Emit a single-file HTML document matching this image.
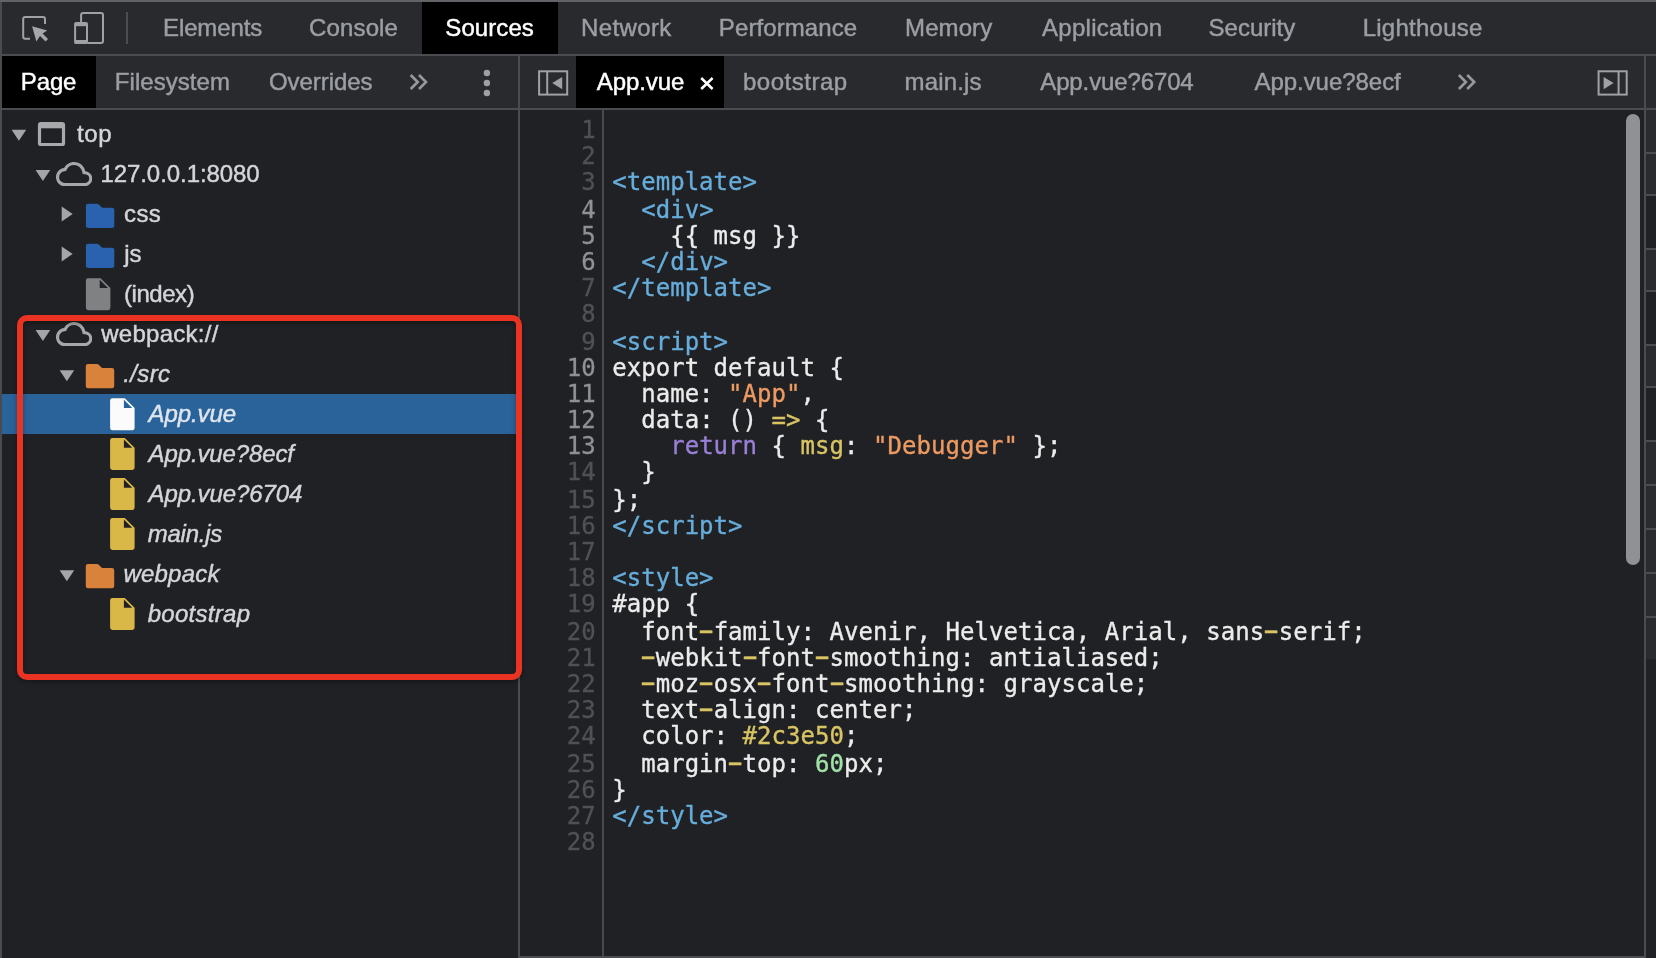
<!DOCTYPE html>
<html><head><meta charset="utf-8"><title>DevTools Sources</title>
<style>
html,body{margin:0;padding:0;}
body{width:1656px;height:958px;overflow:hidden;background:#202124;position:relative;font-family:"Liberation Sans","Helvetica Neue",Helvetica,Arial,sans-serif;}
#root{position:absolute;left:0;top:0;width:1656px;height:958px;will-change:transform}
.ab{position:absolute;display:block}
.tx{position:absolute;font-size:24px;line-height:28px;white-space:pre;-webkit-text-stroke:0.45px currentColor}
.ln{position:absolute;left:522px;width:73.6px;text-align:right;font-family:"DejaVu Sans Mono","Liberation Mono",monospace;font-size:24px;line-height:28px;height:28px;color:#4f5155;-webkit-text-stroke:0.3px currentColor}
.ln.b{color:#8f9194}
.cl{position:absolute;left:612.2px;font-family:"DejaVu Sans Mono","Liberation Mono",monospace;font-size:24px;line-height:28px;height:28px;white-space:pre;letter-spacing:0.04px;-webkit-text-stroke:0.35px currentColor}
.ct{color:#66addb} .cd{color:#ececec} .ck{color:#9a80d6} .cs{color:#ec9a62} .cy{color:#d8c463} .cg{color:#a2e2a8}
.ch{color:#d8c463;display:inline-block;transform:translateY(-0.4px) scale(1.95,1.15);transform-origin:50% 62%}
</style></head><body><div id="root">
<!-- toolbars -->
<div class="ab" style="left:0;top:0;width:1656px;height:54px;background:#292a2d"></div>
<div class="ab" style="left:0;top:54px;width:1656px;height:2px;background:#4a4c50"></div>
<div class="ab" style="left:0;top:56px;width:1656px;height:52px;background:#292a2d"></div>
<div class="ab" style="left:0;top:108px;width:1656px;height:2px;background:#4a4c50"></div>
<!-- selected tabs -->
<div class="ab" style="left:422px;top:2px;width:136px;height:52px;background:#000"></div>
<div class="ab" style="left:2px;top:56px;width:94px;height:52px;background:#000"></div>
<div class="ab" style="left:576px;top:56px;width:148px;height:52px;background:#000"></div>
<svg class="ab" style="left:408px;top:73px" width="22" height="19" viewBox="408 73 22 19"><path d="M410.70 75.00 L417.70 82.00 L410.70 89.00 M419.00 75.00 L426.00 82.00 L419.00 89.00" fill="none" stroke="#98999d" stroke-width="2.6"/></svg>
<svg class="ab" style="left:1457px;top:73px" width="22" height="19" viewBox="1457 73 22 19"><path d="M1458.90 75.00 L1465.90 82.00 L1458.90 89.00 M1467.20 75.00 L1474.20 82.00 L1467.20 89.00" fill="none" stroke="#98999d" stroke-width="2.6"/></svg>
<!-- kebab -->
<svg class="ab" style="left:482px;top:68px" width="10" height="30" viewBox="482 68 10 30"><circle cx="486.9" cy="73" r="3.2" fill="#a0a0a2"/><circle cx="486.9" cy="83" r="3.2" fill="#a0a0a2"/><circle cx="486.9" cy="93.05" r="3.2" fill="#a0a0a2"/></svg>
<!-- close x -->
<svg class="ab" style="left:698px;top:75px" width="18" height="17" viewBox="698 75 18 17"><path d="M701.2 78 L712.6 89 M712.6 78 L701.2 89" stroke="#ffffff" stroke-width="2.5" fill="none"/></svg>
<!-- toolbar divider -->
<div class="ab" style="left:126px;top:12px;width:2px;height:32px;background:#4b4d51"></div>
<!-- inspect icon -->
<svg class="ab" style="left:20px;top:14px" width="30" height="30" viewBox="20 14 30 30"><path d="M30 38.8 L25.2 38.8 Q23.2 38.8 23.2 36.8 L23.2 19 Q23.2 17 25.2 17 L43 17 Q45 17 45 19 L45 24" fill="none" stroke="#a0a1a4" stroke-width="2"/><path d="M32.1 26.2 L47.2 30.4 L42.6 33.4 L48 39 L45.6 41.4 L40 35.9 L36.4 41.6 Z" fill="#a5a6a9"/></svg>
<!-- device icon -->
<svg class="ab" style="left:72px;top:10px" width="34" height="36" viewBox="72 10 34 36"><path d="M81.1 22.5 L81.1 15 Q81.1 13 83.1 13 L101 13 Q103 13 103 15 L103 41 Q103 43 101 43 L87.5 43" fill="none" stroke="#a0a1a4" stroke-width="2"/><rect x="75.1" y="23" width="11.9" height="20" rx="1.6" fill="none" stroke="#a0a1a4" stroke-width="2"/><rect x="74.6" y="22.6" width="12.9" height="3.6" fill="#a0a1a4"/><rect x="74.6" y="40" width="12.9" height="3.6" fill="#a0a1a4"/></svg>
<!-- sidebar toggles -->
<svg class="ab" style="left:537px;top:69px" width="33" height="28" viewBox="537 69 33 28"><rect x="539.1" y="71.3" width="28.1" height="23.3" fill="none" stroke="#a0a1a4" stroke-width="2"/><path d="M547.2 71 L547.2 95" stroke="#a0a1a4" stroke-width="2"/><path d="M562.2 77 L562.2 89.2 L552.2 83.1 Z" fill="#a0a1a4"/></svg>
<svg class="ab" style="left:1596px;top:69px" width="33" height="28" viewBox="1596 69 33 28"><rect x="1598.6" y="71.3" width="28.1" height="23.3" fill="none" stroke="#a0a1a4" stroke-width="2"/><path d="M1618.6 71 L1618.6 95" stroke="#a0a1a4" stroke-width="2"/><path d="M1603.6 77 L1603.6 89.2 L1613.6 83.1 Z" fill="#a0a1a4"/></svg>
<!-- pane dividers -->
<div class="ab" style="left:0;top:0;width:2px;height:958px;background:#4a4b4f"></div>
<div class="ab" style="left:518px;top:56px;width:2px;height:902px;background:#4a4c50"></div>
<div class="ab" style="left:602px;top:110px;width:2px;height:846px;background:#47494d"></div>
<div class="ab" style="left:518px;top:956px;width:1128px;height:2px;background:#4b4d51"></div>
<div class="ab" style="left:0;top:0;width:1656px;height:2px;background:#626367"></div>
<!-- right sliver -->
<div class="ab" style="left:1646px;top:110px;width:10px;height:42px;background:#2a2b2e"></div><div class="ab" style="left:1646px;top:154px;width:10px;height:40px;background:#2a2b2e"></div><div class="ab" style="left:1646px;top:250px;width:10px;height:40px;background:#2a2b2e"></div><div class="ab" style="left:1646px;top:346px;width:10px;height:40px;background:#2a2b2e"></div><div class="ab" style="left:1646px;top:442px;width:10px;height:217px;background:#2a2b2e"></div><div class="ab" style="left:1646px;top:152px;width:10px;height:2px;background:#4a4c50"></div><div class="ab" style="left:1646px;top:194px;width:10px;height:2px;background:#4a4c50"></div><div class="ab" style="left:1646px;top:248px;width:10px;height:2px;background:#4a4c50"></div><div class="ab" style="left:1646px;top:290px;width:10px;height:2px;background:#4a4c50"></div><div class="ab" style="left:1646px;top:344px;width:10px;height:2px;background:#4a4c50"></div><div class="ab" style="left:1646px;top:386px;width:10px;height:2px;background:#4a4c50"></div><div class="ab" style="left:1646px;top:440px;width:10px;height:2px;background:#4a4c50"></div><div class="ab" style="left:1646px;top:484px;width:10px;height:2px;background:#4a4c50"></div><div class="ab" style="left:1646px;top:528px;width:10px;height:2px;background:#4a4c50"></div><div class="ab" style="left:1646px;top:572px;width:10px;height:2px;background:#4a4c50"></div><div class="ab" style="left:1646px;top:616px;width:10px;height:2px;background:#4a4c50"></div>
<div class="ab" style="left:1644px;top:56px;width:2px;height:902px;background:#4a4c50"></div>
<!-- scrollbar -->
<div class="ab" style="left:1626px;top:114px;width:14px;height:450.5px;border-radius:7px;background:#919194"></div>
<!-- tree -->
<svg class="ab" style="left:10px;top:128px" width="18" height="14" viewBox="10 128 18 14"><path d="M11.6 129.8 L26.2 129.8 L18.9 140.8 Z" fill="#a3a5a8"/></svg>
<svg class="ab" style="left:36px;top:120px" width="31" height="28" viewBox="36 120 31 28"><rect x="39.5" y="123.5" width="24.0" height="21.0" rx="1.6" fill="none" stroke="#a8a9ab" stroke-width="3.2"/><rect x="38.9" y="122.9" width="25.2" height="5.4" fill="#a8a9ab"/></svg>
<svg class="ab" style="left:34px;top:168px" width="18" height="14" viewBox="34 168 18 14"><path d="M35.6 169.9 L50.2 169.9 L42.9 180.9 Z" fill="#a3a5a8"/></svg>
<svg class="ab" style="left:55.9px;top:161.9px" width="36.3" height="24.3" viewBox="0 4 24 16.06" preserveAspectRatio="none"><clipPath id="cl1"><path d="M19.35 10.04C18.67 6.59 15.64 4 12 4 9.11 4 6.6 5.64 5.35 8.04 2.34 8.36 0 10.91 0 14c0 3.31 2.69 6 6 6h13c2.76 0 5-2.24 5-5 0-2.64-2.05-4.78-4.65-4.96z"/></clipPath><path d="M19.35 10.04C18.67 6.59 15.64 4 12 4 9.11 4 6.6 5.64 5.35 8.04 2.34 8.36 0 10.91 0 14c0 3.31 2.69 6 6 6h13c2.76 0 5-2.24 5-5 0-2.64-2.05-4.78-4.65-4.96z" fill="none" stroke="#a6a7aa" stroke-width="4.10" clip-path="url(#cl1)"/></svg>
<svg class="ab" style="left:60px;top:205px" width="14" height="18" viewBox="60 205 14 18"><path d="M61.7 206.4 L61.7 221.4 L72.7 213.9 Z" fill="#a3a5a8"/></svg>
<svg class="ab" style="left:84px;top:202px" width="32" height="28" viewBox="84 202 32 28"><path d="M85.9 206.0 Q85.9 203.8 88.10000000000001 203.8 L96.9 203.8 Q98.2 203.8 99.10000000000001 204.70000000000002 L102.2 207.8 L112.10000000000001 207.8 Q114.30000000000001 207.8 114.30000000000001 210.0 L114.30000000000001 225.8 Q114.30000000000001 228.0 112.10000000000001 228.0 L88.10000000000001 228.0 Q85.9 228.0 85.9 225.8 Z" fill="#2a62b0"/></svg>
<svg class="ab" style="left:60px;top:245px" width="14" height="18" viewBox="60 245 14 18"><path d="M61.7 246.4 L61.7 261.4 L72.7 253.9 Z" fill="#a3a5a8"/></svg>
<svg class="ab" style="left:84px;top:242px" width="32" height="28" viewBox="84 242 32 28"><path d="M85.9 246.0 Q85.9 243.8 88.10000000000001 243.8 L96.9 243.8 Q98.2 243.8 99.10000000000001 244.70000000000002 L102.2 247.8 L112.10000000000001 247.8 Q114.30000000000001 247.8 114.30000000000001 250.0 L114.30000000000001 265.8 Q114.30000000000001 268.0 112.10000000000001 268.0 L88.10000000000001 268.0 Q85.9 268.0 85.9 265.8 Z" fill="#2a62b0"/></svg>
<svg class="ab" style="left:84px;top:277px" width="28" height="35" viewBox="84 277 28 35"><path d="M85.9 280.59999999999997 Q85.9 278.2 88.30000000000001 278.2 L100.60000000000001 278.2 L110.4 288.0 L110.4 307.8 Q110.4 310.2 108.0 310.2 L88.30000000000001 310.2 Q85.9 310.2 85.9 307.8 Z M99.70 279.70 L99.70 288.00 L108.00 288.00 Z" fill="#808183" fill-rule="evenodd"/></svg>
<svg class="ab" style="left:34px;top:329px" width="18" height="14" viewBox="34 329 18 14"><path d="M35.6 330.0 L50.2 330.0 L42.9 341.0 Z" fill="#a3a5a8"/></svg>
<svg class="ab" style="left:55.9px;top:322.1px" width="36.3" height="24.3" viewBox="0 4 24 16.06" preserveAspectRatio="none"><clipPath id="cl2"><path d="M19.35 10.04C18.67 6.59 15.64 4 12 4 9.11 4 6.6 5.64 5.35 8.04 2.34 8.36 0 10.91 0 14c0 3.31 2.69 6 6 6h13c2.76 0 5-2.24 5-5 0-2.64-2.05-4.78-4.65-4.96z"/></clipPath><path d="M19.35 10.04C18.67 6.59 15.64 4 12 4 9.11 4 6.6 5.64 5.35 8.04 2.34 8.36 0 10.91 0 14c0 3.31 2.69 6 6 6h13c2.76 0 5-2.24 5-5 0-2.64-2.05-4.78-4.65-4.96z" fill="none" stroke="#a6a7aa" stroke-width="4.10" clip-path="url(#cl2)"/></svg>
<svg class="ab" style="left:58px;top:369px" width="18" height="14" viewBox="58 369 18 14"><path d="M59.6 370.2 L74.2 370.2 L66.9 381.2 Z" fill="#a3a5a8"/></svg>
<svg class="ab" style="left:84px;top:363px" width="32" height="28" viewBox="84 363 32 28"><path d="M85.8 366.2 Q85.8 364.0 88.0 364.0 L96.8 364.0 Q98.1 364.0 99.0 364.9 L102.1 368.0 L111.99999999999999 368.0 Q114.19999999999999 368.0 114.19999999999999 370.2 L114.19999999999999 386.0 Q114.19999999999999 388.2 111.99999999999999 388.2 L88.0 388.2 Q85.8 388.2 85.8 386.0 Z" fill="#d9823b"/></svg>
<div class="ab" style="left:2px;top:394px;width:516px;height:40px;background:#2a6399"></div>
<svg class="ab" style="left:109px;top:397px" width="28" height="35" viewBox="109 397 28 35"><path d="M110.1 400.7 Q110.1 398.3 112.5 398.3 L124.8 398.3 L134.6 408.1 L134.6 427.90000000000003 Q134.6 430.3 132.2 430.3 L112.5 430.3 Q110.1 430.3 110.1 427.90000000000003 Z M123.90 399.80 L123.90 408.10 L132.20 408.10 Z" fill="#fbfbfb" fill-rule="evenodd"/></svg>
<svg class="ab" style="left:109px;top:437px" width="28" height="35" viewBox="109 437 28 35"><path d="M110.1 440.4 Q110.1 438.0 112.5 438.0 L124.8 438.0 L134.6 447.8 L134.6 467.6 Q134.6 470.0 132.2 470.0 L112.5 470.0 Q110.1 470.0 110.1 467.6 Z M123.90 439.50 L123.90 447.80 L132.20 447.80 Z" fill="#d9b848" fill-rule="evenodd"/></svg>
<svg class="ab" style="left:109px;top:477px" width="28" height="35" viewBox="109 477 28 35"><path d="M110.1 480.4 Q110.1 478.0 112.5 478.0 L124.8 478.0 L134.6 487.8 L134.6 507.6 Q134.6 510.0 132.2 510.0 L112.5 510.0 Q110.1 510.0 110.1 507.6 Z M123.90 479.50 L123.90 487.80 L132.20 487.80 Z" fill="#d9b848" fill-rule="evenodd"/></svg>
<svg class="ab" style="left:109px;top:517px" width="28" height="35" viewBox="109 517 28 35"><path d="M110.1 520.4 Q110.1 518.0 112.5 518.0 L124.8 518.0 L134.6 527.8 L134.6 547.6 Q134.6 550.0 132.2 550.0 L112.5 550.0 Q110.1 550.0 110.1 547.6 Z M123.90 519.50 L123.90 527.80 L132.20 527.80 Z" fill="#d9b848" fill-rule="evenodd"/></svg>
<svg class="ab" style="left:58px;top:569px" width="18" height="14" viewBox="58 569 18 14"><path d="M59.6 570.2 L74.2 570.2 L66.9 581.2 Z" fill="#a3a5a8"/></svg>
<svg class="ab" style="left:84px;top:563px" width="32" height="28" viewBox="84 563 32 28"><path d="M85.8 566.2 Q85.8 564.0 88.0 564.0 L96.8 564.0 Q98.1 564.0 99.0 564.9 L102.1 568.0 L111.99999999999999 568.0 Q114.19999999999999 568.0 114.19999999999999 570.2 L114.19999999999999 586.0 Q114.19999999999999 588.2 111.99999999999999 588.2 L88.0 588.2 Q85.8 588.2 85.8 586.0 Z" fill="#d9823b"/></svg>
<svg class="ab" style="left:109px;top:597px" width="28" height="35" viewBox="109 597 28 35"><path d="M110.1 600.4 Q110.1 598.0 112.5 598.0 L124.8 598.0 L134.6 607.8 L134.6 627.6 Q134.6 630.0 132.2 630.0 L112.5 630.0 Q110.1 630.0 110.1 627.6 Z M123.90 599.50 L123.90 607.80 L132.20 607.80 Z" fill="#d9b848" fill-rule="evenodd"/></svg>
<!-- labels -->
<div class="tx" style="left:163.05px;top:14.00px;color:#9b9ea4;letter-spacing:-0.129px">Elements</div>
<div class="tx" style="left:309.00px;top:14.00px;color:#9b9ea4;letter-spacing:0.150px">Console</div>
<div class="tx" style="left:445.35px;top:14.00px;color:#ffffff;letter-spacing:0.075px">Sources</div>
<div class="tx" style="left:581.05px;top:14.00px;color:#9b9ea4;letter-spacing:0.375px">Network</div>
<div class="tx" style="left:718.85px;top:14.00px;color:#9b9ea4;letter-spacing:0.090px">Performance</div>
<div class="tx" style="left:905.05px;top:14.00px;color:#9b9ea4;letter-spacing:0.090px">Memory</div>
<div class="tx" style="left:1042.05px;top:14.00px;color:#9b9ea4;letter-spacing:0.270px">Application</div>
<div class="tx" style="left:1208.60px;top:14.00px;color:#9b9ea4;letter-spacing:0.000px">Security</div>
<div class="tx" style="left:1362.65px;top:14.00px;color:#9b9ea4;letter-spacing:0.250px">Lighthouse</div>
<div class="tx" style="left:20.85px;top:68.00px;color:#ffffff;letter-spacing:-0.150px">Page</div>
<div class="tx" style="left:114.85px;top:68.00px;color:#9b9ea4;letter-spacing:0.050px">Filesystem</div>
<div class="tx" style="left:268.95px;top:68.00px;color:#9b9ea4;letter-spacing:-0.056px">Overrides</div>
<div class="tx" style="left:596.80px;top:68.00px;color:#ffffff;letter-spacing:-0.075px">App.vue</div>
<div class="tx" style="left:743.00px;top:68.00px;color:#9b9ea4;letter-spacing:0.506px">bootstrap</div>
<div class="tx" style="left:904.60px;top:68.00px;color:#9b9ea4;letter-spacing:0.150px">main.js</div>
<div class="tx" style="left:1040.25px;top:68.00px;color:#9b9ea4;letter-spacing:-0.123px">App.vue?6704</div>
<div class="tx" style="left:1254.45px;top:68.00px;color:#9b9ea4;letter-spacing:-0.041px">App.vue?8ecf</div>
<div class="tx" style="left:76.90px;top:120.10px;color:#d3d5da;letter-spacing:0.675px">top</div>
<div class="tx" style="left:100.45px;top:160.10px;color:#d3d5da;letter-spacing:-0.069px">127.0.0.1:8080</div>
<div class="tx" style="left:123.95px;top:200.10px;color:#d3d5da;letter-spacing:0.450px">css</div>
<div class="tx" style="left:124.20px;top:240.10px;color:#d3d5da;letter-spacing:-0.000px">js</div>
<div class="tx" style="left:124.00px;top:280.10px;color:#d3d5da;letter-spacing:-0.450px">(index)</div>
<div class="tx" style="left:101.24px;top:320.10px;color:#d3d5da;letter-spacing:0.260px">webpack://</div>
<div class="tx" style="left:123.35px;top:360.10px;color:#d3d5da;font-style:italic;letter-spacing:0.337px">./src</div>
<div class="tx" style="left:148.55px;top:400.10px;color:#dfe5ee;font-style:italic;letter-spacing:-0.075px">App.vue</div>
<div class="tx" style="left:148.55px;top:440.10px;color:#d3d5da;font-style:italic;letter-spacing:-0.123px">App.vue?8ecf</div>
<div class="tx" style="left:148.55px;top:480.10px;color:#d3d5da;font-style:italic;letter-spacing:-0.082px">App.vue?6704</div>
<div class="tx" style="left:147.65px;top:520.10px;color:#d3d5da;font-style:italic;letter-spacing:-0.225px">main.js</div>
<div class="tx" style="left:123.40px;top:560.10px;color:#d3d5da;font-style:italic;letter-spacing:0.225px">webpack</div>
<div class="tx" style="left:147.70px;top:600.10px;color:#d3d5da;font-style:italic;letter-spacing:0.281px">bootstrap</div>
<!-- red annotation -->
<div class="ab" style="left:16.7px;top:314.6px;width:505.1px;height:365.4px;box-sizing:border-box;border:6.5px solid #ea3323;border-radius:10px;box-shadow:0 2px 5px rgba(0,0,0,.35), inset 0 2px 5px rgba(0,0,0,.35)"></div>
<!-- code -->
<div class="ln" style="top:115.5px">1</div>
<div class="ln" style="top:141.5px">2</div>
<div class="ln" style="top:167.5px">3</div>
<div class="cl" style="top:167.5px"><span class="ct">&lt;template&gt;</span></div>
<div class="ln b" style="top:195.5px">4</div>
<div class="cl" style="top:195.5px"><span class="cd">  </span><span class="ct">&lt;div&gt;</span></div>
<div class="ln b" style="top:221.5px">5</div>
<div class="cl" style="top:221.5px"><span class="cd">    {{ msg }}</span></div>
<div class="ln b" style="top:247.5px">6</div>
<div class="cl" style="top:247.5px"><span class="cd">  </span><span class="ct">&lt;/div&gt;</span></div>
<div class="ln" style="top:273.5px">7</div>
<div class="cl" style="top:273.5px"><span class="ct">&lt;/template&gt;</span></div>
<div class="ln" style="top:299.5px">8</div>
<div class="ln" style="top:327.5px">9</div>
<div class="cl" style="top:327.5px"><span class="ct">&lt;script&gt;</span></div>
<div class="ln b" style="top:353.5px">10</div>
<div class="cl" style="top:353.5px"><span class="cd">export default {</span></div>
<div class="ln b" style="top:379.5px">11</div>
<div class="cl" style="top:379.5px"><span class="cd">  name: </span><span class="cs">&quot;App&quot;</span><span class="cd">,</span></div>
<div class="ln b" style="top:405.5px">12</div>
<div class="cl" style="top:405.5px"><span class="cd">  data</span><span class="cd">: () </span><span class="cy">=&gt;</span><span class="cd"> {</span></div>
<div class="ln b" style="top:431.5px">13</div>
<div class="cl" style="top:431.5px"><span class="cd">    </span><span class="ck">return</span><span class="cd"> { </span><span class="cy">msg</span><span class="cd">: </span><span class="cs">&quot;Debugger&quot;</span><span class="cd"> };</span></div>
<div class="ln" style="top:457.5px">14</div>
<div class="cl" style="top:457.5px"><span class="cd">  }</span></div>
<div class="ln" style="top:485.5px">15</div>
<div class="cl" style="top:485.5px"><span class="cd">};</span></div>
<div class="ln" style="top:511.5px">16</div>
<div class="cl" style="top:511.5px"><span class="ct">&lt;/script&gt;</span></div>
<div class="ln" style="top:537.5px">17</div>
<div class="ln" style="top:563.5px">18</div>
<div class="cl" style="top:563.5px"><span class="ct">&lt;style&gt;</span></div>
<div class="ln" style="top:589.5px">19</div>
<div class="cl" style="top:589.5px"><span class="cd">#app {</span></div>
<div class="ln" style="top:617.5px">20</div>
<div class="cl" style="top:617.5px"><span class="cd">  font</span><span class="ch">-</span><span class="cd">family: Avenir, Helvetica, Arial, sans</span><span class="ch">-</span><span class="cd">serif;</span></div>
<div class="ln" style="top:643.5px">21</div>
<div class="cl" style="top:643.5px"><span class="cd">  </span><span class="ch">-</span><span class="cd">webkit</span><span class="ch">-</span><span class="cd">font</span><span class="ch">-</span><span class="cd">smoothing: antialiased;</span></div>
<div class="ln" style="top:669.5px">22</div>
<div class="cl" style="top:669.5px"><span class="cd">  </span><span class="ch">-</span><span class="cd">moz</span><span class="ch">-</span><span class="cd">osx</span><span class="ch">-</span><span class="cd">font</span><span class="ch">-</span><span class="cd">smoothing: grayscale;</span></div>
<div class="ln" style="top:695.5px">23</div>
<div class="cl" style="top:695.5px"><span class="cd">  text</span><span class="ch">-</span><span class="cd">align: center;</span></div>
<div class="ln" style="top:721.5px">24</div>
<div class="cl" style="top:721.5px"><span class="cd">  color: </span><span class="cy">#2c3e50</span><span class="cd">;</span></div>
<div class="ln" style="top:749.5px">25</div>
<div class="cl" style="top:749.5px"><span class="cd">  margin</span><span class="ch">-</span><span class="cd">top: </span><span class="cg">60</span><span class="cd">px;</span></div>
<div class="ln" style="top:775.5px">26</div>
<div class="cl" style="top:775.5px"><span class="cd">}</span></div>
<div class="ln" style="top:801.5px">27</div>
<div class="cl" style="top:801.5px"><span class="ct">&lt;/style&gt;</span></div>
<div class="ln" style="top:827.5px">28</div>
</div></body></html>
